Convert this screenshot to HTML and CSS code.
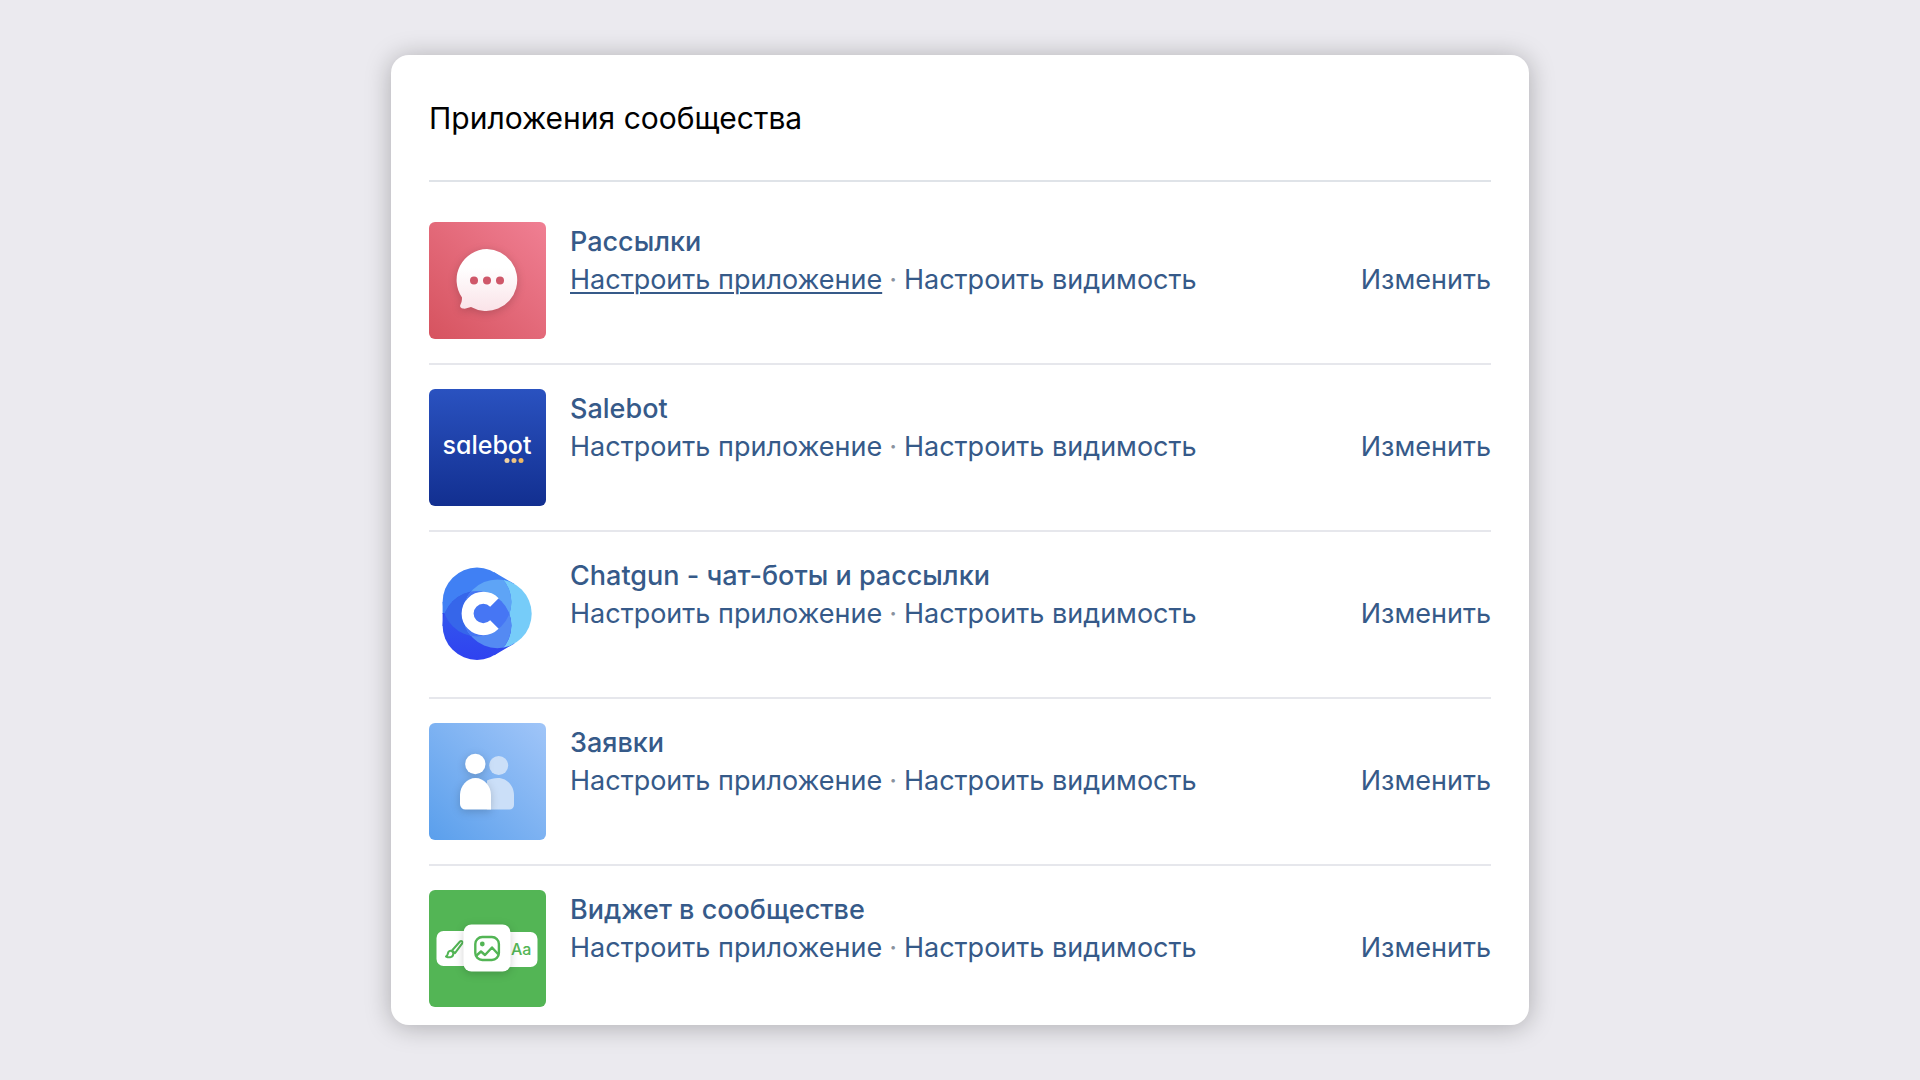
FILE: index.html
```html
<!DOCTYPE html>
<html lang="ru">
<head>
<meta charset="utf-8">
<meta name="viewport" content="width=device-width, initial-scale=1">
<title>Приложения сообщества</title>
<link rel="stylesheet" href="styles.css">
</head>
<body>
<main class="card">
  <header class="card-header">
    <h1 class="card-title">Приложения сообщества</h1>
  </header>
  <ul class="apps">
    <li class="app">
      <svg class="app-icon" viewBox="0 0 117 117" aria-hidden="true">
        <defs>
          <linearGradient id="pink" x1="0" y1="1" x2="1" y2="0"><stop offset="0" stop-color="#d6535f"/><stop offset="1" stop-color="#f07f93"/></linearGradient>
          <linearGradient id="bubble" x1="0" y1="0" x2="0" y2="1"><stop offset="0.3" stop-color="#fff"/><stop offset="1" stop-color="#fae3e8"/></linearGradient>
        </defs>
        <rect width="117" height="117" fill="url(#pink)"/>
        <path class="soft-shadow" fill="url(#bubble)" d="M58 27a31 31 0 1 1-16 58c-3 1-6 2-8 1.500-2.500-.5-3.500-2-2.500-4 1-2 1.500-4 1.500-7A31 31 0 0 1 58 27z"/>
        <g fill="#cf5769"><circle cx="45" cy="58.500" r="4"/><circle cx="58" cy="58.500" r="4"/><circle cx="71" cy="58.500" r="4"/></g>
      </svg>
      <div class="app-info">
        <a class="app-name" href="#">Рассылки</a>
        <div class="app-actions"><a class="is-hovered" href="#">Настроить приложение</a><span class="dot">·</span><a href="#">Настроить видимость</a></div>
      </div>
      <a class="app-edit" href="#">Изменить</a>
    </li>
    <li class="app">
      <svg class="app-icon" viewBox="0 0 117 117" aria-hidden="true">
        <defs><linearGradient id="navy" x1="0" y1="0" x2="0" y2="1"><stop offset="0" stop-color="#2a52c0"/><stop offset="1" stop-color="#122f90"/></linearGradient></defs>
        <rect width="117" height="117" fill="url(#navy)"/>
        <text class="salebot-text" x="58" y="65" text-anchor="middle">salebot</text>
        <circle cx="78" cy="71.500" r="2.500" fill="#f0d2a4"/><circle cx="85" cy="71.500" r="2.500" fill="#efc583"/><circle cx="92" cy="71.500" r="2.500" fill="#efb863"/>
      </svg>
      <div class="app-info">
        <a class="app-name" href="#">Salebot</a>
        <div class="app-actions"><a href="#">Настроить приложение</a><span class="dot">·</span><a href="#">Настроить видимость</a></div>
      </div>
      <a class="app-edit" href="#">Изменить</a>
    </li>
    <li class="app">
      <svg class="app-icon" viewBox="0 0 117 117" aria-hidden="true">
        <defs>
          <clipPath id="top"><circle cx="48" cy="46" r="34.400"/></clipPath>
          <clipPath id="bottom"><circle cx="48" cy="69.500" r="34.400"/></clipPath>
          <linearGradient id="deep" x1="0" y1="0" x2="0" y2="1"><stop offset="0" stop-color="#3560ec"/><stop offset="1" stop-color="#2f42f0"/></linearGradient>
        </defs>
        <path fill="#4080f4" d="M13.600 46h6v12h-6zM60 20l5.300-3.700 20.300 11.800L76 34 60 30z"/>
        <path fill="#3048ee" d="M13.600 57h6v13h-6zM60 95l5.300 4.200 20.300-11.800L76 81 60 86z"/>
        <circle cx="68.300" cy="57.800" r="34.400" fill="#76ccf9"/>
        <circle cx="48" cy="46" r="34.400" fill="#4080f4"/>
        <circle cx="48" cy="69.500" r="34.400" fill="url(#deep)"/>
        <g clip-path="url(#top)"><circle cx="48" cy="69.500" r="34.400" fill="#3666ea"/><circle cx="68.300" cy="57.800" r="34.400" fill="#5ea4f6"/></g>
        <g clip-path="url(#bottom)"><circle cx="68.300" cy="57.800" r="34.400" fill="#548af3"/><g clip-path="url(#top)"><circle cx="68.300" cy="57.800" r="34.400" fill="#4676f4"/></g></g>
        <path d="M65.400 46.400a15.700 15.700 0 1 0 0 22.200" fill="none" stroke="#fff" stroke-width="12"/>
      </svg>
      <div class="app-info">
        <a class="app-name" href="#">Chatgun - чат-боты и рассылки</a>
        <div class="app-actions"><a href="#">Настроить приложение</a><span class="dot">·</span><a href="#">Настроить видимость</a></div>
      </div>
      <a class="app-edit" href="#">Изменить</a>
    </li>
    <li class="app">
      <svg class="app-icon" viewBox="0 0 117 117" aria-hidden="true">
        <defs><linearGradient id="sky" x1="0" y1="1" x2="1" y2="0"><stop offset="0" stop-color="#5a9fec"/><stop offset="1" stop-color="#a0c5f8"/></linearGradient></defs>
        <rect width="117" height="117" fill="url(#sky)"/>
        <g fill="#cbdff8"><circle cx="69.700" cy="42.500" r="9.500"/><path d="M58 57.500C61 56 65 55 69 55c9 0 16 8 16 17v10a4.500 4.500 0 0 1-4.500 4.500H58z"/></g>
        <g class="soft-shadow" fill="#fff"><circle cx="46.300" cy="41" r="10.200"/><path d="M46.500 55C38 55 31 63 31 72v9a5.500 5.500 0 0 0 5.500 5.500H62V72c0-9-7-17-15.500-17z"/></g>
      </svg>
      <div class="app-info">
        <a class="app-name" href="#">Заявки</a>
        <div class="app-actions"><a href="#">Настроить приложение</a><span class="dot">·</span><a href="#">Настроить видимость</a></div>
      </div>
      <a class="app-edit" href="#">Изменить</a>
    </li>
    <li class="app">
      <svg class="app-icon" viewBox="0 0 117 117" aria-hidden="true">
        <rect width="117" height="117" fill="#53b555"/>
        <rect x="7.500" y="41" width="50" height="35" rx="7" fill="#fff"/>
        <rect x="58" y="42" width="50.500" height="35" rx="7" fill="#fff"/>
        <g fill="none" stroke="#53b555" stroke-width="2" stroke-linecap="round" stroke-linejoin="round">
          <path d="M23 60.500L31 51.500c1.300-1.300 3.300.3 2.200 1.900L26 63.200z"/>
          <path d="M17 66.500c2-.8 1.400-3 2.500-4.600 1.600-2.200 5-.8 4.800 2-.3 3.500-4 4.200-7.300 2.600z"/>
        </g>
        <text class="widget-text" x="82" y="65">Aa</text>
        <rect class="soft-shadow" x="34.500" y="34.500" width="47" height="47" rx="8" fill="#fff"/>
        <g fill="none" stroke="#53b555" stroke-width="2.400" stroke-linejoin="round" stroke-linecap="round">
          <rect x="46.300" y="47" width="23.600" height="23" rx="7"/>
          <path d="M47.500 65.500l4.500-4 4 3.500 7-7.500 6 6.500"/>
        </g>
        <circle cx="53.300" cy="54" r="2.400" fill="#53b555"/>
      </svg>
      <div class="app-info">
        <a class="app-name" href="#">Виджет в сообществе</a>
        <div class="app-actions"><a href="#">Настроить приложение</a><span class="dot">·</span><a href="#">Настроить видимость</a></div>
      </div>
      <a class="app-edit" href="#">Изменить</a>
    </li>
  </ul>
</main>
</body>
</html>
```

FILE: styles.css
```css
* {
  box-sizing: border-box;
}

body {
  margin: 0;
  padding: 55px 20px;
  background: #ebeaef;
  color: #000;
  font-family: Inter, "Liberation Sans", sans-serif;
  font-size: 27px;
  line-height: 38px;
}

.card {
  max-width: 1138px;
  margin: 0 auto;
  padding: 0 38px 18px;
  background: #fff;
  border-radius: 18px;
  box-shadow: 0 2px 26px rgba(0, 0, 0, 0.27);
}

.card-header {
  padding: 43px 0 42px;
  border-bottom: 2px solid #dfe3e8;
}

.card-title {
  margin: 0;
  font-size: 30px;
  font-weight: 400;
  line-height: 40px;
}

.apps {
  margin: 0;
  padding: 16px 0 0;
  list-style: none;
}

.app {
  display: grid;
  grid-template-columns: 117px 1fr auto;
  column-gap: 24px;
  padding: 24px 0;
  border-bottom: 2px solid #e6e7ec;
}

.app:last-child {
  padding-bottom: 0;
  border-bottom: 0;
}

.app-icon {
  display: block;
  width: 117px;
  height: 117px;
  border-radius: 6px;
}

.app a {
  color: #365a89;
  text-decoration: none;
}

.app a:hover,
.app .is-hovered {
  text-decoration: underline;
  text-decoration-thickness: 2px;
  text-underline-offset: 3px;
}

.app .app-name {
  font-weight: 500;
}

.app-info {
  padding-top: 1px;
}

.app-edit {
  padding-top: 39px;
}

.dot {
  padding: 0 7px;
  color: #8a929e;
}

.soft-shadow {
  filter: drop-shadow(0 2px 4px rgba(0, 0, 0, 0.18));
}

.salebot-text {
  fill: #fff;
  font-size: 25px;
  font-weight: 500;
  font-feature-settings: "cv11";
}

.widget-text {
  fill: #53b555;
  font-size: 16px;
  font-weight: 500;
}
```
